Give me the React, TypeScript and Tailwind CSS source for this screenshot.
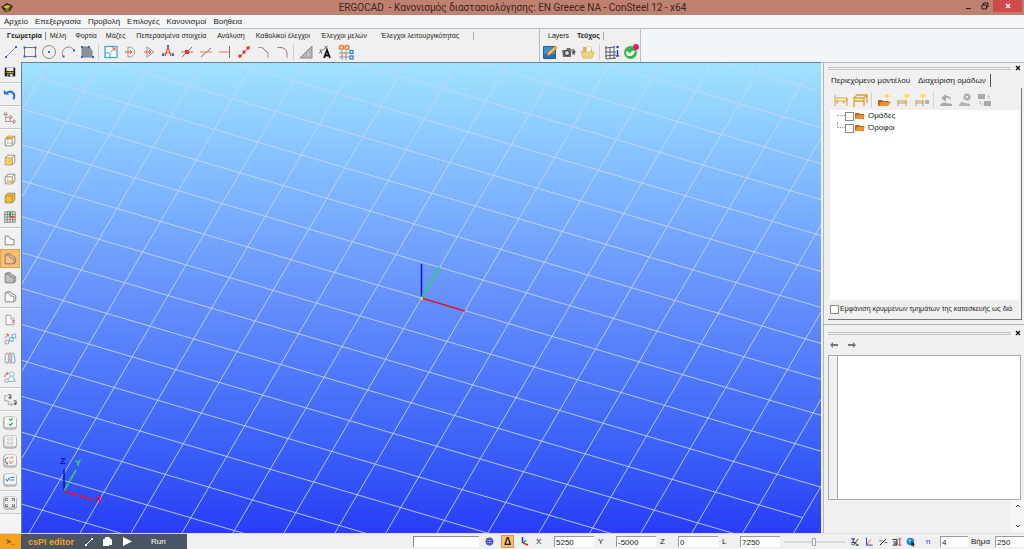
import React, { useState } from 'react';

/* ---------- small drawing helpers ---------- */

interface IconProps {
  children: React.ReactNode;
  className?: string;
}

function Icon({ children, className = 'w-4 h-4' }: IconProps) {
  return (
    <svg viewBox="0 0 16 16" className={className} fill="none" aria-hidden="true">
      {children}
    </svg>
  );
}

function Dots({ points, fill = '#3b5fc4', size = 2 }: { points: number[][]; fill?: string; size?: number }) {
  return (
    <>
      {points.map(([x, y], i) => (
        <rect key={i} x={x - size / 2} y={y - size / 2} width={size} height={size} fill={fill} />
      ))}
    </>
  );
}

type Tool = { label: string; icon: React.ReactNode };

/* ---------- top toolbar ---------- */

const drawTools: Tool[] = [
  { label: 'Line', icon: <><path d="M3 13 13 3" stroke="#888" /><Dots points={[[3, 13], [13, 3]]} /></> },
  { label: 'Rectangle', icon: <><rect x="2.500" y="3.500" width="11" height="9" stroke="#777" /><Dots points={[[2.5, 3.5], [13.5, 3.5], [2.5, 12.5], [13.5, 12.5]]} /></> },
  { label: 'Circle', icon: <><circle cx="8" cy="8" r="6.500" stroke="#8a8a8a" /><Dots points={[[8, 8]]} /></> },
  { label: 'Arc', icon: <><path d="M3 12C0 6 8-1 14 6" stroke="#8a8a8a" /><Dots points={[[3.5, 12.5], [14, 6.5]]} /></> },
  { label: 'Plate', icon: <><path d="M3 3h7l3 4v6H3z" fill="#8a919b" stroke="#7b838e" /><Dots points={[[3, 3], [3, 13], [14, 13], [10, 3]]} /></> },
];

const editTools: Tool[] = [
  { label: 'Scale', icon: <><rect x="2" y="2.500" width="12" height="11" stroke="#49a9c4" strokeWidth="1.300" fill="#f7fcfd" /><path d="M2 9h5v4.500" stroke="#49a9c4" /><path d="m8 8 4-4M9 4h3v3" stroke="#d45c4d" /></> },
  { label: 'Offset', icon: <><path d="M6 3v10M6 3c9 0 9 10 0 10" stroke="#999" /><path d="M3 8h7M8 6l2 2-2 2" stroke="#dd5546" /></> },
  { label: 'Extrude', icon: <><path d="M6 3v10l7-5z" stroke="#999" /><path d="M3 8h7M8 6l2 2-2 2" stroke="#dd5546" /></> },
  { label: 'Explode', icon: <><path d="m8 3-3 9M8 3l3 9M6 9h4" stroke="#dc4b3e" strokeWidth="1.200" /><path d="m2 9 3 1M14 9l-3 1" stroke="#888" /><Dots points={[[3, 11], [13, 11], [8, 2]]} /></> },
  { label: 'Split at point', icon: <><path d="M3 13 13 3" stroke="#777" /><path d="M2 8h12" stroke="#d0685e" /><rect x="6" y="6" width="4" height="4" fill="#ef3528" /></> },
  { label: 'Trim', icon: <><path d="M3 13 13 4" stroke="#777" /><path d="M2 8h12" stroke="#da7a6f" /></> },
  { label: 'Extend', icon: <><path d="M2 8h10" stroke="#da7a6f" /><path d="M12.500 2v12" stroke="#777" /></> },
  { label: 'Divide', icon: <><path d="M3 14 14 2" stroke="#777" /><Dots points={[[4, 12], [8, 8], [12, 4]]} fill="#ef3528" size={3} /></> },
  { label: 'Chamfer', icon: <><path d="M3 3.500h4M13 9v5" stroke="#999" /><path d="m7 3.500 6 5.500" stroke="#a05a78" /></> },
  { label: 'Fillet', icon: <><path d="M3 3.500h3M13 10v4" stroke="#999" /><path d="M6 3.500c5 0 7 3 7 6.500" stroke="#a05a78" /></> },
];

const measureTools: Tool[] = [
  { label: 'Measure', icon: <><path d="M2 14 14 2v12z" fill="#b4b7b5" stroke="#888" /><path d="M8 11.500 11.500 8v3.500z" fill="#f0f0f0" stroke="#999" strokeWidth=".5" /></> },
  { label: 'Annotate', icon: <><path d="M2 9 11 2M3 5l2 5M8 2l2 3" stroke="#777" /><path d="m7 14 3-8 3 8M8 11.500h4" stroke="#111" strokeWidth="1.800" /></> },
];

const documentTools: Tool[] = [
  { label: 'Edit document', icon: <><rect x="1" y="2" width="13" height="13" rx="1" fill="#1f5f9f" /><rect x="2" y="3" width="11" height="11" fill="#3f8fd4" /><path d="M2 10h11v4H2z" fill="#2a6fb0" /><path d="m5 12 1-4 7-6 2 2-7 7z" fill="#f4c04b" stroke="#8b5d21" strokeWidth=".6" /></> },
  { label: 'Snapshot', icon: <><path d="M1 6h4l1-2h3l1 2v7H2z" fill="#6d6d6d" /><circle cx="6" cy="9" r="2.500" fill="#d9d9d9" stroke="#333" /><path d="M10 5h4v6h-3z" fill="#9a9a9a" /><circle cx="13" cy="8" r="1.500" fill="#555" /></> },
  { label: 'Open document', icon: <><path d="M3 3h4l1 2h4v8H3z" fill="#e0b658" /><path d="m7 2 4 1v6H6z" fill="#fff" stroke="#c9b27a" strokeWidth=".5" /><path d="m1 7 4 1h9l-2 6H3z" fill="#f3d27c" stroke="#cfa648" strokeWidth=".6" /></> },
];

const modelTools: Tool[] = [
  { label: 'Structure info', icon: <><path d="M2 2v13M6 3v11M10 2v13M1 4l10-1M1 8h11M1 12l11-1M2 15l10-1" stroke="#5a5f66" /><path d="M13.500 6v6M12 12h3" stroke="#2e46b9" strokeWidth="1.500" /><circle cx="13.500" cy="3" r="1.300" fill="#2e46b9" /></> },
  { label: 'Service', icon: <><circle cx="7.500" cy="8.500" r="6.500" fill="#37b54a" /><path d="M3 8c2-1 3 0 4 2 1-3 3-4 5-3-1 4-3 5-6 5-2 0-3-2-3-4z" fill="#fff" /><circle cx="13" cy="3" r="3" fill="#e2216d" /></> },
];

/* ---------- left toolbar ---------- */

function Cube({ face, filled }: { face?: 'top' | 'front' | 'side'; filled?: boolean }) {
  return (
    <>
      <path d="m2.500 5.500 3-3h8v8l-3 3h-8z" fill={filled ? '#f7bd2b' : '#fff'} stroke="#8b8777" />
      {face === 'top' && <path d="m3 5.500 3-3h7l-3 3z" fill="#f8b81c" />}
      {face === 'front' && <path d="M3 6h7v7H3z" fill="#fbcf48" />}
      {face === 'side' && <path d="m3 13 3-3h7l-3 3z" fill="#fbd55e" />}
      <path d="M2.500 5.500h8v8M10.500 5.500l3-3" stroke="#a08e50" />
      {!filled && face !== 'front' && <path d="M5.500 2.500v8h8M5.500 10.500l-3 3" stroke="#999" strokeWidth=".7" />}
    </>
  );
}

function Profile({ fill, thick }: { fill: string; thick?: boolean }) {
  return (
    <>
      {thick && <path d="m2.500 3.500 2-1.500h4l1 2 3 1 2 1.500v5l-2 2" fill={fill} stroke="#777" />}
      <path d="M2.500 3.500h4l1.500 3 4.500 1v6h-10z" fill={fill} stroke="#777" />
    </>
  );
}

function Key({ children }: { children: React.ReactNode }) {
  return (
    <>
      <rect x=".5" y="1" width="15" height="14" rx="3" fill="#c8c8c8" stroke="#a5a5a5" />
      <rect x="2" y="1" width="13" height="11.500" rx="2" fill="#f5f5f5" />
      {children}
    </>
  );
}

const sideGroups: Tool[][] = [
  [{ label: 'Save', icon: <><path d="M2 3h12v10H2z" fill="#222" /><path d="M4 3h8v4H4z" fill="#e9e9e9" /><path d="M4 8h8v1H4z" fill="#e3b51e" /><path d="M5 10h6v3H5z" fill="#ddd" /><path d="M6 10h2v3H6z" fill="#333" /></> }],
  [{ label: 'Undo', icon: <><path d="M4 6c5-4 11 0 8 7" stroke="#2f74dc" strokeWidth="2.500" /><path d="M1 7V2l6 6z" fill="#2f74dc" /></> }],
  [{ label: 'Move model', icon: <><path d="M3 3v9h9M3 7h5v5" stroke="#a28b8b" /><path d="m1 4 2-3 2 3zM12 10l3 2-3 2zM8 5l3 2-3 2z" stroke="#a7807c" fill="#fff" /></> }],
  [
    { label: 'Top face', icon: <Cube face="top" /> },
    { label: 'Front face', icon: <Cube face="front" /> },
    { label: 'Bottom face', icon: <Cube face="side" /> },
    { label: 'Solid cube', icon: <Cube filled /> },
    { label: 'Grid', icon: <><path d="M2 2h12v12H2z" fill="#e9e9e9" /><path d="M2 2v12M5 2v12M8 2v12M11 2v12M14 2v12M2 2h12M2 5h12M2 8h12M2 11h12M2 14h12" stroke="#7c8278" /><path d="M8 2v6" stroke="#15a146" strokeWidth="1.800" /><path d="M8 8h5" stroke="#e0362c" strokeWidth="1.800" /></> },
  ],
  [
    { label: 'Wireframe', icon: <Profile fill="#f7f7f7" /> },
    { label: 'Hidden line', icon: <Profile fill="#f3c384" thick /> },
    { label: 'Shaded', icon: <Profile fill="#bfbfbf" thick /> },
    { label: 'Outline', icon: <Profile fill="#fff" thick /> },
  ],
  [
    { label: 'Clip', icon: <><path d="M3.500 2.500h5l1 3 3 1v7h-9z" stroke="#8b9197" fill="#fff" /><path d="m8 6 5 5M9 12l4-4" stroke="#d9665c" /></> },
    { label: 'Copy', icon: <><path d="M2.500 9.500h4v4h-4z" stroke="#8b9197" fill="#fff" /><path d="M7.500 6.500h4v4h-4zM10.500 2.500h4v4h-4z" stroke="#4ba3cf" fill="#fff" /><path d="m2 7 4-4M3.500 2.500H6V5" stroke="#da473d" /></> },
    { label: 'Mirror', icon: <><path d="M2.500 4.500h1v-2h2.500v11H2.500z" stroke="#8b9197" fill="#fff" /><path d="M10 2.500h2.500v4h1v7H10z" stroke="#4ba3cf" fill="#fff" /><path d="M8 1v14" stroke="#d9665c" /></> },
    { label: 'Rotate', icon: <><path d="m3 13 8-8M5 13h9l-3-6" stroke="#76b3cf" /><circle cx="10" cy="4.500" r="2.500" fill="#fff" stroke="#76b3cf" /><circle cx="4" cy="12" r="2" fill="#fff" stroke="#8b9197" /><path d="M2 8c0-3 1-4 4-4M4 2.500 6 4 4 5.500" stroke="#da473d" /></> },
  ],
  [{ label: 'Renumber', icon: <><path d="M2 5v4h4v4h5M5 3H2v2M9 11l2 2-2 2" stroke="#999" /><path d="M6 2h3v4H7V4.500h2M12 9h3v4h-2v-1.500h2" stroke="#444" /></> }],
  [
    { label: 'Check all', icon: <Key><path d="m7 3.500 1.500 1.500L11 2.500M7 9l1.500 1.500L11 8" stroke="#2ca048" strokeWidth="1.300" /></Key> },
    { label: 'Clear all', icon: <Key><path d="M5 3h2v3H5zM9 3h2v3H9zM5 8h2v3H5zM9 8h2v3H9z" stroke="#ccc" /></Key> },
    { label: 'Invert', icon: <Key><path d="M6 4C1 4 2 11 5 11M4 9l1.500 2L4 12" stroke="#555" /><path d="m7 8 2 3 3-3M8 5l2-2 2 2" stroke="#d9483d" /></Key> },
    { label: 'Check visible', icon: <Key><path d="m3 7 2 2 3-4M8 8h5M9 5h4" stroke="#338bd0" strokeWidth="1.300" /></Key> },
  ],
  [{ label: 'Zoom extents', icon: <Key><path d="M3 6V3h3M10 3h3v3M13 9v3h-3M6 12H3V9M4 4l2 2M12 4l-2 2M4 11l2-2M12 11l-2-2" stroke="#555" /></Key> }],
];

/* ---------- group manager ---------- */

const gold = '#d9a52c';

const groupTools: Tool[] = [
  { label: 'Show part', icon: <path d="M2 3v11M14 6v8M2 6h12v3H2M4 9v3M11 9v3" stroke={gold} /> },
  { label: 'Show whole', icon: <path d="M2 5v10M12 6v8M2 6h10v3H2M2 6l3-3h10l-3 3M15 3v8" stroke={gold} strokeWidth="1.300" /> },
];

const newTools: Tool[] = [
  { label: 'New group', icon: <><path d="M2 8h4l1 1h6l-2 5H2z" fill="#b9641a" /><path d="m3 14 2-4h10l-3 4z" fill="#e98f2b" /><path d="m11 1 1 2 3 1-3 1-1 2-1-2-3-1 3-1z" fill="#ffd94d" /></> },
  { label: 'New subgroup', icon: <><path d="M3 8v6M11 8v6M3 9h8v2H3" stroke="#c2a15c" /><path d="m12 1 1 2 3 1-3 1-1 2-1-2-3-1 3-1z" fill="#ffd94d" /></> },
  { label: 'New from selection', icon: <><path d="M2 8v6M9 8v6M2 9h7v2H2" stroke="#c2a15c" /><path d="M11 9h4M11 11h4" stroke="#777" /><path d="m9 1 1 2 3 1-3 1-1 2-1-2-3-1 3-1z" fill="#ffd94d" /></> },
];

const disabledTools: Tool[] = [
  { label: 'Refresh group', icon: <path d="M3 6 8 2v2c4 0 5 2 5 4-2-2-3-2-5-2v4zM2 13c2-3 4-3 6-2l6 1v2H2z" fill="#aaa" /> },
  { label: 'Delete group', icon: <><circle cx="10" cy="5" r="3.500" fill="#aaa" /><path d="m8.500 3.500 3 3m0-3-3 3" stroke="#eee" /><path d="M2 13c2-4 4-3 6-2l5 1v2H2z" fill="#b5b5b5" /></> },
  { label: 'Copy group', icon: <><path d="M2 2h7v5H2zM8 9h7v5H8z" fill="#aaa" /><path d="M11 4h2v3M4 9v3h3" stroke="#bbb" /></> },
];

/* ---------- status bar ---------- */

const snapTools: Tool[] = [
  { label: 'Snap section', icon: <><path d="M2 3h6M5 3v6M2 9h6" stroke="#2d2b78" strokeWidth="1.600" /><path d="m6 8 7 5M13 3 6 13M9 13h5" stroke="#222" strokeWidth="1.300" /><path d="M2 12h4" stroke="#3aa555" strokeWidth="2" /></> },
  { label: 'Snap axis', icon: <><path d="M4 1v12h10" stroke="#3342c4" strokeWidth="1.600" /><path d="m4 13 7-9" stroke="#d8433b" strokeWidth="1.300" /></> },
  { label: 'Snap middle', icon: <><path d="M3 13 13 3" stroke="#222" strokeWidth="1.600" /><path d="M2 6h5M10 9h5" stroke="#555" strokeWidth="1.300" /></> },
  { label: 'Snap grid', icon: <><path d="M1 4h7v9H1M2 8h6" stroke="#222" strokeWidth="1.500" /><path d="M10 3h5M12.500 3v10M10 13h5" stroke="#c1372e" strokeWidth="1.500" /><path d="M3 11h5" stroke="#2d3fc0" strokeWidth="2" /></> },
  { label: 'Snap view', icon: <><circle cx="7" cy="7" r="6" fill="#1c86dd" /><path d="M4 5c2-3 5-1 4 1S4 9 4 5z" fill="#8fd2ff" /><path d="m9 7 6 5-3 .5L13 16l-2-1-1-2-2 1z" fill="#222" /></> },
];

function ToolButton({ tool, className = 'w-[19px] h-5' }: { tool: Tool; className?: string }) {
  return (
    <button type="button" title={tool.label} aria-label={tool.label} className={`flex items-center justify-center shrink-0 ${className}`}>
      <Icon>{tool.icon}</Icon>
    </button>
  );
}

function ToolGroup({ tools }: { tools: Tool[] }) {
  return (
    <div className="flex">
      {tools.map((tool) => (
        <ToolButton key={tool.label} tool={tool} />
      ))}
    </div>
  );
}

function Divider() {
  return <span className="w-px h-4 mx-[2px] bg-[#d0d0d0]" />;
}

/* ---------- window parts ---------- */

function TitleBar() {
  return (
    <header className="relative flex items-center h-[15px] shrink-0 bg-[#be8170] text-[#3d2420]">
      <svg viewBox="0 0 12 10" className="w-3 h-[10px] ml-px" aria-hidden="true">
        <path d="m0 4 6-4 6 3-3 5-5 1z" fill="#342d16" />
        <path d="m2 4 4-2 4 1-4 3z" fill="#d8ba25" />
        <path d="m3 7 6-2-2 4z" fill="#8c7b1d" />
      </svg>
      <h1 className="flex-1 pr-3 text-center whitespace-pre font-['Roboto',sans-serif] text-[10px] leading-[15px]">
        ERGOCAD  - Κανονισμός διαστασιολόγησης: EN Greece NA - ConSteel 12 - x64
      </h1>
      <div className="absolute right-0 top-0 flex h-3">
        <button type="button" aria-label="Minimize" className="w-4 flex items-center justify-center">
          <span className="w-[5px] h-px mt-1 bg-[#2b1a17]" />
        </button>
        <button type="button" aria-label="Restore" className="w-[17px] flex items-center justify-center">
          <svg viewBox="0 0 8 8" className="w-2 h-2" fill="none" stroke="#2b1a17">
            <path d="M1 3h4.500v4H1zM2.500 3V1H7v4H5.500" />
          </svg>
        </button>
        <button type="button" aria-label="Close" className="w-[29px] mr-[2px] flex items-center justify-center bg-[#cf4a4a]">
          <svg viewBox="0 0 6 6" className="w-[6px] h-[6px]" stroke="#fff" strokeWidth="1.300">
            <path d="m1 1 4 4m0-4L1 5" />
          </svg>
        </button>
      </div>
    </header>
  );
}

const menus = ['Αρχείο', 'Επεξεργασία', 'Προβολή', 'Επιλογές', 'Κανονισμοί', 'Βοήθεια'];

const ribbonTabs = [
  'Γεωμετρία',
  'Μέλη',
  'Φορτία',
  'Μάζες',
  'Πεπερασμένα στοιχεία',
  'Ανάλυση',
  'Καθολικοί έλεγχοι',
  'Έλεγχοι μελών',
  'Έλεγχοι λειτουργικότητας',
];

function Ribbon() {
  const [tab, setTab] = useState(ribbonTabs[0]);
  const [docTab, setDocTab] = useState('Τεύχος');

  return (
    <div className="flex h-[34px] shrink-0 border-t border-[#b9bcc0] bg-[#f4f5f7]">
      <section className="w-[540px] shrink-0 border-r border-[#b9bcc0] bg-[#f0f0f0]">
        <div className="flex items-center h-[13px] pl-[7px] text-[7px] leading-[13px]">
          {ribbonTabs.map((name, i) => (
            <button
              key={name}
              type="button"
              onClick={() => setTab(name)}
              className={`whitespace-nowrap ${
                tab === name
                  ? 'font-bold pr-[3px] mr-1 border-r border-[#888] leading-[8px]'
                  : i < 3 ? 'mr-[9px]' : i < 7 ? 'mr-[11px]' : 'mr-[14px]'
              }`}
            >
              {name}
            </button>
          ))}
          <span className="w-px h-2 bg-[#aaa]" />
        </div>
        <div className="flex items-center px-px">
          <ToolGroup tools={drawTools} />
          <Divider />
          <ToolGroup tools={editTools} />
          <Divider />
          <ToolGroup tools={measureTools} />
          <button type="button" title="Raster" aria-label="Raster" className="flex items-center justify-center w-6 h-5">
            <Icon>
              <path d="M4 7v9M8 7v9M1 9h10M1 13h10" stroke="#8c9197" />
              <circle cx="3.500" cy="3.500" r="2" stroke="#ef7a27" strokeWidth="1.500" />
              <circle cx="9" cy="3.500" r="2" stroke="#ef7a27" strokeWidth="1.500" />
              <rect x="12" y="6.500" width="3" height="3" stroke="#2588d8" strokeWidth="1.300" />
              <rect x="12" y="12" width="3" height="3" stroke="#2588d8" strokeWidth="1.300" />
            </Icon>
          </button>
        </div>
      </section>
      <section className="w-[101px] shrink-0 border-r border-[#b9bcc0] bg-[#f0f0f0]">
        <div className="flex items-center h-[13px] pl-2 gap-2 text-[7px] leading-[8px]">
          {['Layers', 'Τεύχος'].map((name) => (
            <button
              key={name}
              type="button"
              onClick={() => setDocTab(name)}
              className={docTab === name ? 'font-bold pr-[3px] border-r border-[#aaa]' : ''}
            >
              {name}
            </button>
          ))}
        </div>
        <div className="flex items-center">
          <ToolGroup tools={documentTools} />
          <Divider />
          <ToolGroup tools={modelTools} />
        </div>
      </section>
    </div>
  );
}

function SideToolbar() {
  const [mode, setMode] = useState('Hidden line');

  return (
    <nav className="w-[21px] shrink-0 bg-[#f4f4f5]">
      <div className="bg-[#f0f0f0] border-b border-[#c8c8c8] pb-px">
        {sideGroups.map((group, i) => (
          <div key={i}>
            {i > 0 && <div className="my-px border-y border-t-[#c6c6c6] border-b-white" />}
            {group.map((tool) => (
              <button
                key={tool.label}
                type="button"
                title={tool.label}
                aria-label={tool.label}
                onClick={() => setMode(tool.label)}
                className={`flex items-center justify-center w-5 h-[19px] ${
                  mode === tool.label ? 'bg-[#fdbf6f] border border-[#e0a04c]' : ''
                }`}
              >
                <Icon className="w-[14px] h-[14px] shrink-0">{tool.icon}</Icon>
              </button>
            ))}
          </div>
        ))}
      </div>
    </nav>
  );
}

/* Model space: a 20 x 20 raster seen in parallel projection, origin in the middle */
const CENTER = { x: 399.5, y: 235 };
const U = { x: 43.5, y: 12.77 };
const V = { x: 17.96, y: -30.67 };
const HALF = 10;

function project(a: number, b: number) {
  return {
    x: CENTER.x + a * U.x + b * V.x,
    y: CENTER.y + a * U.y + b * V.y,
  };
}

function Viewport() {
  const steps = Array.from({ length: HALF * 2 + 1 }, (_, i) => i - HALF);

  return (
    <main className="flex-1 min-w-0 border-l border-t border-[#5f8296] overflow-hidden bg-linear-to-b from-[#a0e2ff] via-[#6690fb] to-[#2a3cf5]">
      <svg viewBox="0 0 799 470" preserveAspectRatio="xMidYMid slice" className="block w-full h-full">
        <g stroke="#c4d9fb" strokeOpacity=".85">
          {steps.map((n) => {
            const a = project(n, -HALF);
            const b = project(n, HALF);
            const c = project(-HALF, n);
            const d = project(HALF, n);
            return (
              <React.Fragment key={n}>
                <line x1={a.x} y1={a.y} x2={b.x} y2={b.y} />
                <line x1={c.x} y1={c.y} x2={d.x} y2={d.y} />
              </React.Fragment>
            );
          })}
        </g>
        <g strokeWidth="1.500">
          <path d="M399.500 235V201" stroke="#0a12d8" />
          <path d="m399.500 235 18-31" stroke="#2fd05a" />
          <path d="m399.500 235 43.500 13" stroke="#d6142c" />
          <rect x="398" y="234" width="3" height="3" fill="#f2b98a" />
        </g>
        <rect x="536" y="454" width="3" height="2" fill="#18b35a" />
        <g strokeWidth="1.500">
          <path d="M42 428v-22" stroke="#0a12c8" />
          <path d="m42 428 12-21" stroke="#2fe060" />
          <path d="m42 428 30 9" stroke="#ea1030" />
        </g>
        <g fontFamily="Liberation Sans, sans-serif" fontSize="9" fontWeight="bold">
          <text x="38" y="401" fill="#0a12c8">Z</text>
          <text x="53" y="403" fill="#2fe060">Y</text>
          <text x="74" y="439" fill="#ea1030">X</text>
        </g>
      </svg>
    </main>
  );
}

function Grip() {
  return (
    <div className="flex items-center h-[10px] gap-[3px] pr-[2px]">
      <span className="flex-1 h-[3px] border-y border-[#c2c2c2]" />
      <button type="button" aria-label="Close panel" className="w-2 h-2 flex items-center justify-center">
        <svg viewBox="0 0 6 6" className="w-[6px] h-[6px]" stroke="#111" strokeWidth="1.300">
          <path d="m1 1 4 4m0-4L1 5" />
        </svg>
      </button>
    </div>
  );
}

function GroupPanel() {
  const [tab, setTab] = useState('Διαχείριση ομάδων');

  return (
    <section className="flex flex-col h-[257px] shrink-0 pl-1">
      <Grip />
      <div className="flex items-center h-[15px] pl-[3px] gap-2 text-[8px] leading-[13px] whitespace-nowrap">
        {['Περιεχόμενο μοντέλου', 'Διαχείριση ομάδων'].map((name) => (
          <button
            key={name}
            type="button"
            onClick={() => setTab(name)}
            className={tab === name ? 'pr-1 border-r border-[#555]' : ''}
          >
            {name}
          </button>
        ))}
      </div>
      <div className="flex flex-col flex-1 mr-[2px] px-[2px] border-r border-b border-[#777]">
        <div className="flex items-center h-[22px] pt-[2px] pl-px">
          <ToolGroup tools={groupTools} />
          <Divider />
          <ToolGroup tools={newTools} />
          <Divider />
          <ToolGroup tools={disabledTools} />
        </div>
        <ul className="flex-1 bg-white pl-[7px] text-[8px] leading-3">
          {['Ομάδες', 'Όροφοι'].map((name, i) => (
            <li key={name} className="flex h-3">
              <span
                className={`w-2 h-[6px] border-b border-dotted border-[#999] ${i > 0 ? 'border-l' : ''}`}
              />
              <label className="flex items-center">
                <input type="checkbox" className="appearance-none w-[9px] h-[9px] mr-px bg-white border border-[#888] checked:bg-[#555]" />
                <svg viewBox="0 0 10 8" className="w-[10px] h-2 mr-[3px]" aria-hidden="true">
                  <path d="M0 1h4l1 1h4v5H0z" fill="#b9641a" />
                  <path d="m0 7 2-4h8L8 7z" fill="#ee8f2a" />
                </svg>
                {name}
              </label>
            </li>
          ))}
        </ul>
        <label className="flex items-center h-[19px] text-[7px] whitespace-nowrap">
          <input type="checkbox" className="appearance-none w-[9px] h-[9px] mr-px shrink-0 bg-white border border-[#888] checked:bg-[#555]" />
          Εμφάνιση κρυμμένων τμημάτων της κατασκευής ως διά
        </label>
      </div>
    </section>
  );
}

function Arrow({ flip }: { flip?: boolean }) {
  return (
    <svg viewBox="0 0 8 6" className={`w-2 h-[6px] ${flip ? 'rotate-180' : ''}`} aria-hidden="true">
      <path d="m0 3 3-3v2h5v2H3v2z" fill="#777" />
    </svg>
  );
}

function PropertyPanel() {
  return (
    <section className="flex flex-col flex-1 min-h-0 mt-1 pt-[3px] pl-1 border-t border-[#b5b5b5]">
      <Grip />
      <div className="flex items-center h-3 mt-px pl-[2px] gap-[10px]">
        <button type="button" aria-label="Back"><Arrow /></button>
        <button type="button" aria-label="Forward"><Arrow flip /></button>
      </div>
      <div className="flex flex-1 mt-1 mr-[3px] border border-[#a9a9a9]">
        <div className="w-[9px] border-r border-[#a9a9a9]" />
        <div className="flex-1 bg-white" />
      </div>
      <div className="flex justify-end h-[32px] mb-px">
        <div className="flex flex-col justify-between w-[13px] py-1 bg-[#f6f6f6] items-center">
          <svg viewBox="0 0 6 4" className="w-[6px] h-1" fill="none" stroke="#444"><path d="m1 3 2-2 2 2" /></svg>
          <svg viewBox="0 0 6 4" className="w-[6px] h-1" fill="none" stroke="#444"><path d="m1 1 2 2 2-2" /></svg>
        </div>
      </div>
    </section>
  );
}

function Coordinate({ name, value }: { name: string; value: string }) {
  return (
    <label className="flex items-center w-[62px]">
      <span className="w-[18px]">{name}</span>
      <input defaultValue={value} className="w-10 h-[11px] px-px bg-white border-t border-l border-[#999]" />
    </label>
  );
}

function StatusBar() {
  return (
    <footer className="flex h-4 shrink-0 bg-[#f0f0f0] text-[8px] leading-[10px]">
      <div className="flex items-center w-[187px] shrink-0 bg-[#4a5563] border-t border-[#d8d8d8] text-white">
        <button type="button" aria-label="Console" className="w-[21px] h-full bg-[#f5a11f] text-[#4a3a20] font-bold">&gt;_</button>
        <span className="w-[64px] pl-[7px] text-[#f5a11f] font-bold text-[9px] whitespace-nowrap">csPI editor</span>
        <button type="button" aria-label="Draw" className="w-[18px]">
          <svg viewBox="0 0 8 8" className="w-2 h-2" stroke="#fff"><path d="m1 7 6-6" /><path d="M0 7h2M6 1h2" strokeWidth="2" /></svg>
        </button>
        <button type="button" aria-label="Files" className="w-[20px]">
          <svg viewBox="0 0 9 9" className="w-[9px] h-[9px]" fill="#fff"><path d="M2 0h4l3 3v5H2z" /><path d="M0 2h6v7H0z" /></svg>
        </button>
        <button type="button" aria-label="Play" className="w-[28px]">
          <svg viewBox="0 0 9 9" className="w-[9px] h-[9px]" fill="#fff"><path d="m0 0 9 4.500L0 9z" /></svg>
        </button>
        <button type="button">Run</button>
      </div>
      <div className="flex flex-1 items-center justify-end border-t border-[#e2e2e2]">
        <input aria-label="Command" className="w-[66px] h-[11px] px-px bg-white border-t border-l border-[#888]" />
        <button type="button" aria-label="Global" className="flex items-center justify-center w-5">
          <svg viewBox="0 0 10 10" className="w-[9px] h-[9px]" fill="none" stroke="#2b39c9"><circle cx="5" cy="5" r="4" /><ellipse cx="5" cy="5" rx="1.800" ry="4" /><path d="M1 5h8M2 3h6M2 7h6" /></svg>
        </button>
        <button type="button" className="w-[13px] h-[13px] mx-[2px] bg-[#fdbf6f] border border-[#d9994a] font-bold text-[10px] leading-[11px]">Δ</button>
        <button type="button" aria-label="Local axes" className="flex items-center justify-center w-[18px] mr-[2px]">
          <svg viewBox="0 0 8 9" className="w-2 h-[9px]" fill="none"><path d="M1.500 0v6" stroke="#2233c9" strokeWidth="1.500" /><path d="m2 6 3-3" stroke="#27a34a" strokeWidth="1.500" /><path d="m2 6 5 2" stroke="#d9281f" strokeWidth="1.500" /></svg>
        </button>
        <Coordinate name="X" value="5250" />
        <Coordinate name="Y" value="-5000" />
        <Coordinate name="Z" value="0" />
        <Coordinate name="L" value="7250" />
        <input
          type="range"
          aria-label="Zoom"
          defaultValue="48"
          className="appearance-none w-[62px] h-2 bg-transparent [&::-webkit-slider-runnable-track]:h-[2px] [&::-webkit-slider-runnable-track]:bg-[#d9d9d9] [&::-webkit-slider-thumb]:appearance-none [&::-webkit-slider-thumb]:w-1 [&::-webkit-slider-thumb]:h-2 [&::-webkit-slider-thumb]:-mt-[3px] [&::-webkit-slider-thumb]:bg-[#f0f0f0] [&::-webkit-slider-thumb]:border [&::-webkit-slider-thumb]:border-[#aaa]"
        />
        <div className="flex ml-[2px]">
          {snapTools.map((tool) => (
            <button key={tool.label} type="button" title={tool.label} aria-label={tool.label} className="flex items-center justify-center w-[14px]">
              <Icon className="w-[10px] h-[10px]">{tool.icon}</Icon>
            </button>
          ))}
        </div>
        <label className="flex items-center ml-2">
          <span className="w-[14px] text-[#2b39c9]">n</span>
          <input defaultValue="4" className="w-7 h-[11px] px-px bg-white border-t border-l border-[#999]" />
        </label>
        <label className="flex items-center ml-[3px]">
          <span className="w-6">Βήμα</span>
          <input defaultValue="250" className="w-[29px] h-[11px] px-px bg-white border-t border-l border-[#999]" />
        </label>
      </div>
    </footer>
  );
}

export default function App() {
  return (
    <div className="flex flex-col h-screen overflow-hidden bg-[#f0f0f0] text-[#1c1c1c] font-['Liberation_Sans',sans-serif]">
      <TitleBar />
      <nav className="flex items-center h-[13px] shrink-0 pl-1 gap-[7px] bg-[#f5f6f7] text-[8px] leading-[13px]">
        {menus.map((menu) => (
          <button key={menu} type="button">
            {menu}
          </button>
        ))}
      </nav>
      <Ribbon />
      <div className="flex flex-1 min-h-0">
        <SideToolbar />
        <Viewport />
        <aside className="flex flex-col w-[203px] shrink-0 pl-[2px] border-t border-t-[#b9bcc0] bg-[#f0f0f0]">
          <div className="flex flex-col flex-1 min-h-0 border-l border-[#b5b5b5]">
            <GroupPanel />
            <PropertyPanel />
          </div>
        </aside>
      </div>
      <StatusBar />
    </div>
  );
}
